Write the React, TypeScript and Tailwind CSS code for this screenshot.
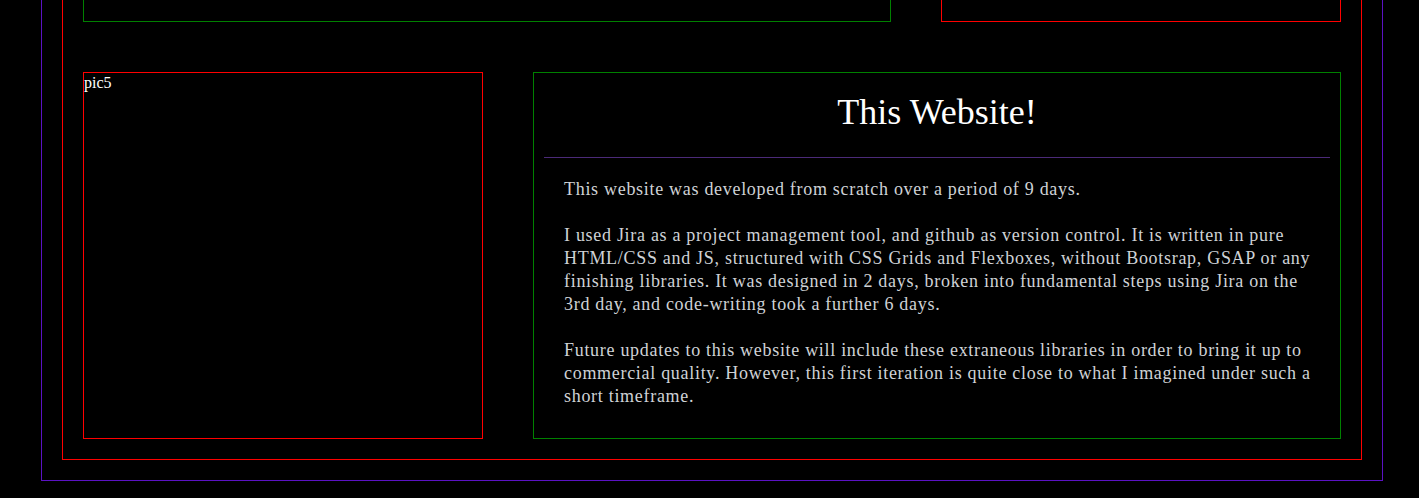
import React from 'react';

const serif = { fontFamily: '"Liberation Serif", "Times New Roman", serif' };

const App: React.FC = () => {
  return (
    <div className="h-[498px] overflow-hidden bg-black pl-[41px]" style={serif}>
      <div className="w-[1342px] border border-t-0 border-[#5b12c4] px-5 pb-5">
        <div className="w-[1300px] border border-t-0 border-[#ff0000] px-5 pb-5">
          {/* top row, scrolled mostly out of view */}
          <div className="grid grid-cols-[808px_400px] gap-x-[50px]">
            <div className="h-[22px] border border-t-0 border-[#008000]" />
            <div className="h-[22px] border border-t-0 border-[#ff0000]" />
          </div>

          <div className="mt-[50px] grid h-[367px] grid-cols-[400px_808px] gap-x-[50px]">
            <div className="border border-[#ff0000] text-[16px] leading-[19px] text-white">pic5</div>

            <div className="border border-[#008000] p-[10px]">
              <h2 className="pt-[9px] text-center text-[36px] leading-[41px] text-white">This Website!</h2>
              <hr className="mt-[24px] border-0 border-t border-[#4b2a78]" />
              <div className="whitespace-nowrap px-5 pt-5 text-[18px] leading-[23px] tracking-[0.7px] text-[#cfd2d6]">
                <p>This website was developed from scratch over a period of 9 days.</p>
                <br />
                <p>
                  I used Jira as a project management tool, and github as version control. It is written in pure
                  <br />
                  HTML/CSS and JS, structured with CSS Grids and Flexboxes, without Bootsrap, GSAP or any
                  <br />
                  finishing libraries. It was designed in 2 days, broken into fundamental steps using Jira on the
                  <br />
                  3rd day, and code-writing took a further 6 days.
                </p>
                <br />
                <p>
                  Future updates to this website will include these extraneous libraries in order to bring it up to
                  <br />
                  commercial quality. However, this first iteration is quite close to what I imagined under such a
                  <br />
                  short timeframe.
                </p>
              </div>
            </div>
          </div>
        </div>
      </div>
    </div>
  );
};

export default App;
